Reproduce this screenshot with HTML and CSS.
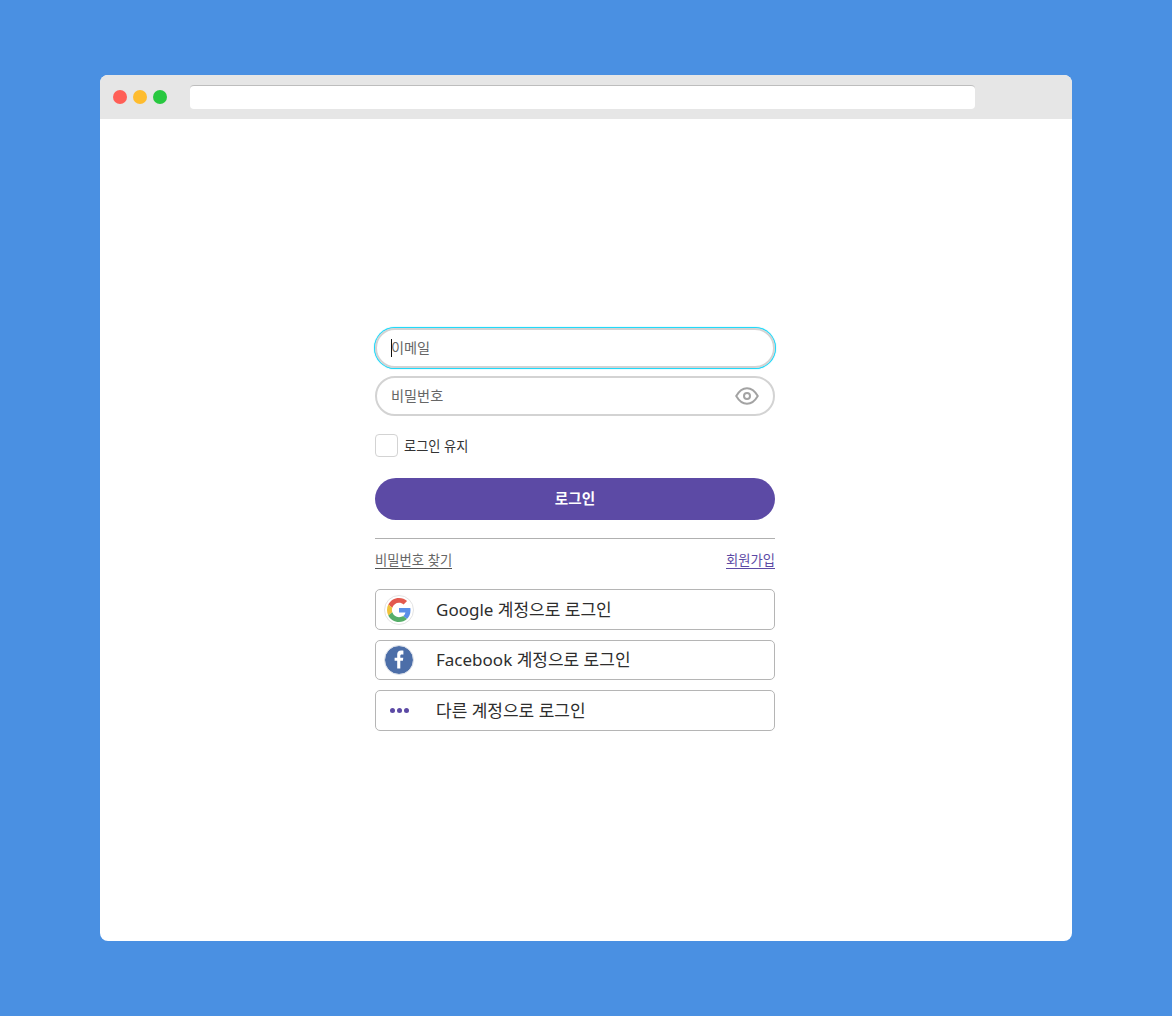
FILE: index.html
```html
<!DOCTYPE html>
<html lang="ko">
<head>
<meta charset="utf-8">
<title>로그인</title>
<link rel="stylesheet" href="styles.css">
</head>
<body>
<div class="window">
  <div class="titlebar">
    <div class="dots"><span class="dot red"></span><span class="dot yellow"></span><span class="dot green"></span></div>
    <div class="address"></div>
  </div>
  <main class="content">
    <form class="form">
      <div class="field focused"><span class="caret"></span><span class="placeholder">이메일</span></div>
      <div class="field password"><span class="placeholder">비밀번호</span>
        <svg class="eye" width="24" height="18" viewBox="0 0 24 18" fill="none" stroke="#a3a3a3" stroke-width="2"><path d="M1.200 9C4 4.200 7.600 1.200 12 1.200S20 4.200 22.800 9C20 13.800 16.400 16.800 12 16.800S4 13.800 1.200 9Z" stroke-linejoin="round"/><circle cx="12" cy="9" r="3"/></svg>
      </div>
      <label class="keep"><span class="check"></span><span class="keep-text">로그인 유지</span></label>
      <button type="button" class="submit">로그인</button>
      <div class="rule"></div>
      <div class="links"><a class="link find">비밀번호 찾기</a><a class="link join">회원가입</a></div>
      <div class="socials">
        <button type="button" class="social tall">
          <span class="badge google">
            <svg width="24" height="24" viewBox="0 0 48 48"><path fill="#E2594E" d="M24 9.500c3.500 0 6.700 1.200 9.200 3.600l6.900-6.900C35.900 2.400 30.400 0 24 0 14.600 0 6.600 5.400 2.600 13.200l8 6.200C12.500 13.700 17.800 9.500 24 9.500z"/><path fill="#5B8FE8" d="M47 24.500c0-1.600-.1-3.100-.4-4.500H24v9h12.900c-.6 3-2.200 5.500-4.700 7.200l7.700 6C44.400 38.100 47 31.900 47 24.500z"/><path fill="#F0C23C" d="M10.600 28.600c-.5-1.400-.8-3-.8-4.600s.3-3.200.8-4.600l-8-6.200C.9 16.500 0 20.100 0 24s.9 7.500 2.600 10.800l8-6.200z"/><path fill="#55AE68" d="M24 48c6.500 0 11.900-2.100 15.900-5.800l-7.700-6c-2.200 1.400-4.900 2.300-8.200 2.300-6.200 0-11.500-4.200-13.400-9.900l-8 6.200C6.600 42.600 14.600 48 24 48z"/></svg>
          </span>
          <span class="social-text">Google 계정으로 로그인</span>
        </button>
        <button type="button" class="social">
          <span class="badge facebook">
            <svg width="28" height="28" viewBox="1 1 28 28"><path fill="#fff" d="M16.300 23.500v-7.700h2.600l.4-3h-3v-1.900c0-.9.300-1.500 1.500-1.500h1.600V5.700c-.3 0-1.200-.1-2.300-.1-2.300 0-3.900 1.400-3.900 4v3.200h-2.600v3h2.600v7.700z"/></svg>
          </span>
          <span class="social-text">Facebook 계정으로 로그인</span>
        </button>
        <button type="button" class="social tall">
          <span class="badge more"><i></i><i></i><i></i></span>
          <span class="social-text">다른 계정으로 로그인</span>
        </button>
      </div>
    </form>
  </main>
</div>
</body>
</html>
```
FILE: styles.css
```css
* { box-sizing: border-box; }
html, body { margin: 0; height: 100%; }
body {
  background: #4a90e2;
  padding: 75px 100px;
  font-family: "Noto Sans CJK KR", "Noto Sans", sans-serif;
  overflow: hidden;
}
.window {
  height: 866px;
  background: #fff;
  border-radius: 8px;
  overflow: hidden;
}
.titlebar {
  height: 44px;
  background: #e6e6e6;
  display: flex;
  align-items: center;
  padding-left: 13px;
}
.dots { display: flex; gap: 6px; margin-right: 22px; }
.dot { width: 14px; height: 14px; border-radius: 50%; }
.red { background: #ff5f57; }
.yellow { background: #febc2e; }
.green { background: #28c840; }
.address {
  width: 785px;
  height: 24px;
  margin-left: 1px;
  background: #fff;
  border-radius: 4px;
  border-top: 1px solid #bdbdbd;
}
.content { padding: 209px 0 0 275px; display: flex; }
.form { width: 400px; display: flex; flex-direction: column; }
.field {
  height: 40px;
  border: 2px solid #d3d3d3;
  border-radius: 20px;
  padding: 0 14px 2px;
  display: flex;
  align-items: center;
  font-size: 14.2px;
  color: #666;
  position: relative;
}
.focused { box-shadow: 0 0 0 1px #22d9f9, 0 0 1px 1px #22d9f9; margin-bottom: 8px; }
.caret { position: absolute; left: 14px; top: 9px; width: 1px; height: 18px; background: #111; }
.password { justify-content: space-between; padding-right: 14px; }
.eye { display: block; margin-top: 2px; }
.keep { display: flex; align-items: center; margin-top: 18px; height: 23px; gap: 6px; }
.check { width: 23px; height: 23px; border: 1px solid #d3d3d3; border-radius: 4px; background: #fff; }
.keep-text { font-size: 13.2px; color: #333; }
.submit {
  margin-top: 21px;
  height: 42px;
  padding: 0 0 3px;
  border: 0;
  border-radius: 21px;
  background: #5c4aa5;
  color: #fff;
  font: 700 14.6px "Noto Sans CJK KR", sans-serif;
}
.rule { height: 1px; background: #b0b0b0; margin-top: 18px; }
.links { display: flex; justify-content: space-between; margin-top: 12px; font-size: 13.3px; line-height: 17px; }
.link { display: block; }
.find { color: #666; border-bottom: 1px solid #555; }
.join { color: #5c4aa5; border-bottom: 1px solid #5c4aa5; }
.socials { display: flex; flex-direction: column; gap: 10px; margin-top: 20px; }
.social {
  height: 40px;
  padding: 0 0 0 8px;
  border: 1px solid #b5b5b5;
  border-radius: 5px;
  background: #fff;
  display: flex;
  align-items: center;
  font: 400 17px "Noto Sans", "Noto Sans CJK KR", sans-serif;
  color: #2e2e2e;
}
.tall { height: 41px; }
.badge {
  width: 30px;
  height: 30px;
  border-radius: 50%;
  display: flex;
  align-items: center;
  justify-content: center;
  flex: none;
  margin-right: 22px;
}
.google { border: 1px solid #e4e4e4; }
.facebook { background: #4c6ea8; background-clip: padding-box; border: 1px solid #d5dbe6; }
.more { gap: 2px; }
.more i { width: 5px; height: 5px; border-radius: 50%; background: #5c4aa5; }
.social-text { line-height: 1; padding-bottom: 1px; }
```
